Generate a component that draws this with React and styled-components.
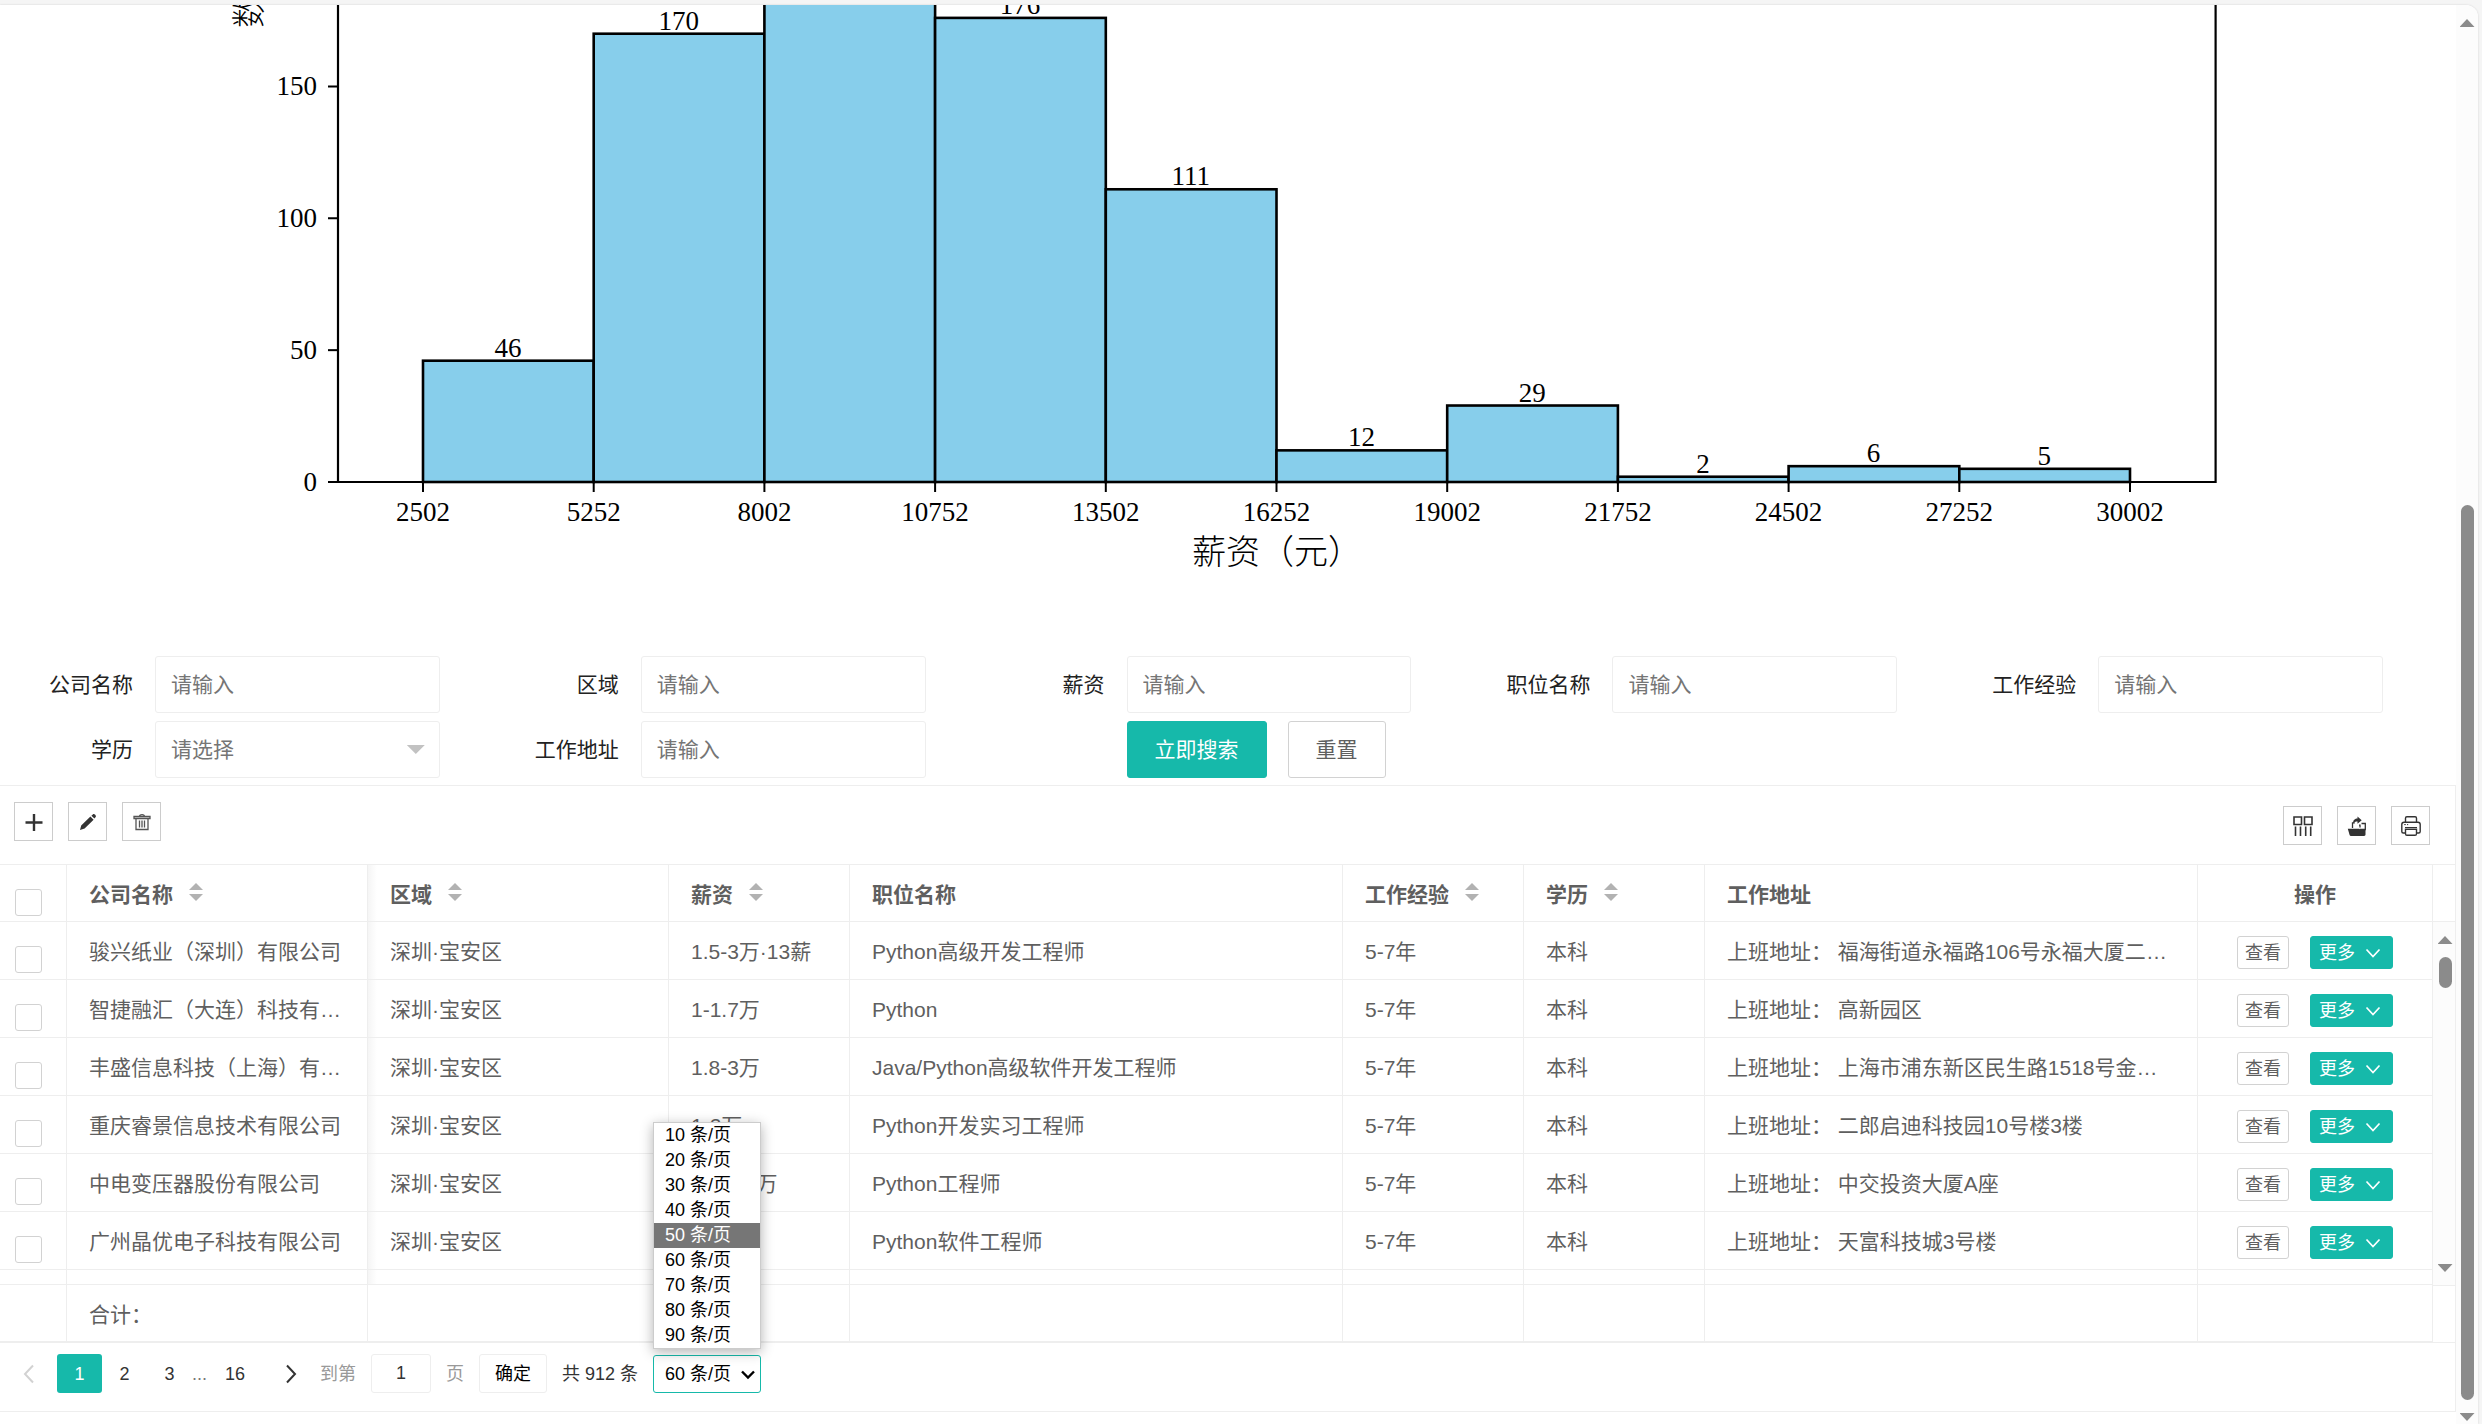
import React from "react";
import styled, { createGlobalStyle, css } from "styled-components";

const TEAL = "#16b9aa";
const LINE = "#eeeeee";
const SANS = '"Liberation Sans", "Noto Sans CJK SC", sans-serif';
const SERIF = '"Liberation Serif", "Noto Sans CJK SC", serif';

const GlobalStyle = createGlobalStyle`
  *, *::before, *::after { box-sizing: border-box; }
  body {
    margin: 0;
    background: #f5f5f5;
    color: #333;
    font: 21px/28px ${SANS};
  }
  button, input, select { font: inherit; margin: 0; }
`;

/* ---------- page frame ---------- */

const Frame = styled.div`
  display: flex;
  min-height: calc(100vh - 5px);
  margin: 5px 4px 0 0;
  overflow: hidden;
  background: #fff;
  border-top-right-radius: 12px;
  box-shadow: 0 0 2px #ccc;
`;

const Content = styled.main`
  flex: 1;
  min-width: 0;
`;

const ScrollTrack = styled.div`
  display: flex;
  flex-direction: column;
  align-items: center;
  width: 22px;
  padding: 14px 0 3px;
  background: #fcfcfc;
`;

const Arrow = styled.span`
  flex: none;
  width: 15px;
  height: 8px;
  background: #8b8b8b;
  clip-path: ${(p) =>
    p.$down ? "polygon(0 0, 100% 0, 50% 100%)" : "polygon(50% 0, 100% 100%, 0 100%)"};
`;

const TrackSpace = styled.span`
  flex: ${(p) => p.$grow};
`;

const Thumb = styled.span`
  flex: ${(p) => p.$grow};
  width: 13px;
  margin-bottom: 13px;
  border-radius: 7px;
  background: #8b8b8b;
`;

/* ---------- chart ---------- */

const ChartSvg = styled.svg`
  display: block;
  width: 100%;
  height: auto;
  font-family: ${SERIF};
  font-size: 27px;
  fill: #000;
`;

const BINS = [46, 170, 262, 176, 111, 12, 29, 2, 6, 5];
const TICKS = [2502, 5252, 8002, 10752, 13502, 16252, 19002, 21752, 24502, 27252, 30002];
const BASE = 482;
const binX = (i) => 423 + i * 170.7;
const valueY = (v) => BASE - v * 2.637;

function Histogram() {
  return (
    <ChartSvg viewBox="0 5 2456 651" role="img" aria-label="薪资（元）">
      {BINS.map((v, i) => (
        <g key={i}>
          <rect
            x={binX(i)}
            y={valueY(v)}
            width={170.7}
            height={BASE - valueY(v)}
            fill="#87ceeb"
            stroke="#000"
            strokeWidth="2.6"
          />
          {v < 200 && (
            <text x={binX(i) + 85} y={valueY(v) - 4} textAnchor="middle">
              {v}
            </text>
          )}
        </g>
      ))}
      <path d="M338 0V482H2215.6V0" fill="none" stroke="#000" strokeWidth="2.2" />
      {TICKS.map((t, i) => (
        <g key={t}>
          <path d={`M${binX(i)} 482V492`} stroke="#000" strokeWidth="2" />
          <text x={binX(i)} y="521" textAnchor="middle">
            {t}
          </text>
        </g>
      ))}
      {[0, 50, 100, 150].map((v) => (
        <g key={v}>
          <path d={`M328 ${valueY(v)}H338`} stroke="#000" strokeWidth="2" />
          <text x="317" y={valueY(v) + 9} textAnchor="end">
            {v}
          </text>
        </g>
      ))}
      <text x="1277" y="564" textAnchor="middle" fontSize="34" fontWeight="300">
        薪资（元）
      </text>
      <text transform="translate(261 28) rotate(-90)" fontSize="34" fontWeight="300">
        数
      </text>
    </ChartSvg>
  );
}

/* ---------- search form ---------- */

const SearchForm = styled.form`
  display: grid;
  grid-template-columns: repeat(5, minmax(0, 1fr));
  row-gap: 8px;
  padding: 0 12px 7px 15px;
`;

const Field = styled.div`
  display: flex;
  align-items: center;
  padding-right: 61px;
`;

const FieldLabel = styled.label`
  flex: none;
  width: 140px;
  padding-right: 22px;
  text-align: right;
  color: #222;
`;

const box = css`
  width: 100%;
  height: 57px;
  padding: 0 15px;
  border: 1px solid ${LINE};
  border-radius: 3px;
  background: #fff;
  outline: 0;
`;

const TextInput = styled.input`
  ${box}
  &::placeholder { color: #757575; opacity: 1; }
`;

const SelectWrap = styled.div`
  position: relative;
  flex: 1;
`;

const FormSelect = styled.select`
  ${box}
  appearance: none;
  color: #757575;
`;

const Caret = styled.span`
  position: absolute;
  right: 15px;
  top: 24px;
  width: 18px;
  height: 9px;
  background: #c2c2c2;
  clip-path: polygon(0 0, 100% 0, 50% 100%);
  pointer-events: none;
`;

const FormActions = styled.div`
  display: flex;
  gap: 21px;
  padding-left: 140px;
`;

const Button = styled.button`
  height: ${(p) => (p.$small ? 33 : 57)}px;
  padding: 0 ${(p) => (p.$small ? 7 : 27)}px;
  border: 1px solid ${(p) => (p.$primary ? TEAL : "#d2d2d2")};
  border-radius: 3px;
  background: ${(p) => (p.$primary ? TEAL : "#fff")};
  color: ${(p) => (p.$primary ? "#fff" : "#5f5f5f")};
  font-size: ${(p) => (p.$small ? 18 : 21)}px;
  line-height: 28px;
  white-space: nowrap;
`;

const MoreButton = styled(Button)`
  display: inline-flex;
  align-items: center;
  gap: 10px;
  padding: 0 11px 0 8px;
`;

/* ---------- table ---------- */

const TableView = styled.section`
  border: solid ${LINE};
  border-width: 1px 1px 1px 0;
`;

const Toolbar = styled.div`
  display: flex;
  justify-content: space-between;
  height: 79px;
  padding: 16px 25px 0 14px;
  border-bottom: 1px solid ${LINE};
`;

const ToolGroup = styled.div`
  display: flex;
  gap: 15px;
  padding-top: ${(p) => (p.$right ? 4 : 0)}px;
`;

const ToolButton = styled.button`
  display: grid;
  place-items: center;
  width: 39px;
  height: 39px;
  padding: 0;
  border: 1px solid #ccc;
  background: #fff;
  color: #333;
`;

const TableArea = styled.div`
  display: grid;
  grid-template-columns: minmax(0, 1fr) 22px;
`;

const Table = styled.table`
  width: 100%;
  table-layout: fixed;
  border-collapse: separate;
  border-spacing: 0;
  color: #5f5f5f;
`;

const cell = css`
  height: ${(p) => p.$h || 58}px;
  padding: 2px 22px 0;
  border: solid ${LINE};
  border-width: 0 1px 1px 0;
  overflow: hidden;
  white-space: nowrap;
  text-overflow: ellipsis;
  text-align: left;
`;

const Th = styled.th`
  ${cell}
  padding-top: 4px;
  ${(p) => p.$center && "text-align: center;"}
`;

const Td = styled.td`
  ${cell}
  ${(p) => p.$shade && "background: linear-gradient(90deg, #f5f5f5, #fff 9px);"}
`;

const ShadeTh = styled(Th)`
  background: linear-gradient(90deg, #f5f5f5, #fff 9px);
`;

const FootTd = styled(Td)`
  padding-top: 4px;
  border-bottom-width: 2px;
`;

const CheckHead = styled.th`
  height: 57px;
  padding: 24px 0 0 15px;
  vertical-align: top;
  border: solid ${LINE};
  border-width: 0 1px 1px 0;
`;

const CheckCell = styled.td`
  padding: 24px 0 0 15px;
  vertical-align: top;
  border: solid ${LINE};
  border-width: 0 1px 1px 0;
`;

const CheckBox = styled.input`
  display: block;
  appearance: none;
  width: 27px;
  height: 27px;
  border: 1px solid #d2d2d2;
  border-radius: 3px;
  background: #fff;
`;

const HeadLine = styled.span`
  display: flex;
  align-items: center;
  gap: 16px;
`;

const Sort = styled.span`
  display: flex;
  flex-direction: column;
  gap: 4px;
  padding-bottom: 6px;
  &::before, &::after {
    content: "";
    width: 14px;
    height: 7px;
    background: #b2b2b2;
    clip-path: polygon(50% 0, 100% 100%, 0 100%);
  }
  &::after { clip-path: polygon(0 0, 100% 0, 50% 100%); }
`;

const RowActions = styled.div`
  display: flex;
  justify-content: center;
  gap: 21px;
  margin: 0 -22px;
  padding-top: 2px;
`;

const SideColumn = styled.div`
  display: flex;
  flex-direction: column;
`;

const SideHead = styled.div`
  height: 57px;
  border-bottom: 1px solid ${LINE};
`;

const SideTrack = styled.div`
  flex: 1;
  display: flex;
  flex-direction: column;
  align-items: center;
  padding: 14px 0 13px 2px;
  background: #fcfcfc;
  border-bottom: 1px solid ${LINE};
`;

const SideThumb = styled.span`
  width: 13px;
  height: 31px;
  margin: 13px 0 auto;
  border-radius: 7px;
  background: #8b8b8b;
`;

/* ---------- pager ---------- */

const Pager = styled.nav`
  display: flex;
  align-items: center;
  height: 68px;
  padding: 0 0 7px 11px;
  font-size: 18px;
`;

const PageButton = styled.button`
  display: flex;
  align-items: center;
  justify-content: ${(p) => (p.$start ? "flex-start" : "center")};
  width: ${(p) => p.$w || 45}px;
  height: 39px;
  padding: 0 ${(p) => (p.$start ? 12 : 0)}px;
  border: 0;
  border-radius: 3px;
  background: ${(p) => (p.$active ? TEAL : "transparent")};
  color: ${(p) => (p.$active ? "#fff" : p.disabled ? "#d2d2d2" : "#333")};
`;

const Dots = styled.span`
  width: 16px;
  color: #777;
`;

const Jump = styled.div`
  display: flex;
  align-items: center;
  gap: 15px;
  color: #999;
`;

const JumpInput = styled.input`
  width: 60px;
  height: 39px;
  padding: 0;
  border: 1px solid ${LINE};
  border-radius: 3px;
  text-align: center;
  color: #333;
`;

const Confirm = styled.button`
  width: 68px;
  height: 39px;
  padding: 0;
  border: 1px solid ${LINE};
  border-radius: 3px;
  background: #fff;
  color: #000;
`;

const Count = styled.span`
  color: #333;
`;

const LimitWrap = styled.div`
  position: relative;
  color: #000;
`;

const LimitSelect = styled.select`
  display: block;
  appearance: none;
  width: 108px;
  height: 38px;
  padding: 0 11px;
  border: 1px solid ${TEAL};
  border-radius: 3px;
  background: #fff;
  color: #000;
  outline: 0;
`;

const LimitChevron = styled.svg`
  position: absolute;
  right: 6px;
  top: 15px;
  pointer-events: none;
`;

const Options = styled.ul`
  position: absolute;
  left: 0;
  right: 0;
  bottom: calc(100% + 6px);
  margin: 0;
  padding: 0;
  list-style: none;
  border: 1px solid #ccc;
  background: #fff;
  box-shadow: 0 3px 12px rgba(0, 0, 0, 0.3);
`;

const Option = styled.li`
  height: 25px;
  padding-left: 11px;
  line-height: 25px;
  background: ${(p) => (p.$active ? "#767676" : "#fff")};
  color: ${(p) => (p.$active ? "#fff" : "#000")};
`;

/* ---------- icons ---------- */

const Svg = ({ size = 20, children }) => (
  <svg width={size} height={size} viewBox="0 0 20 20" fill="none" stroke="currentColor" aria-hidden="true">
    {children}
  </svg>
);

const PlusIcon = () => (
  <Svg>
    <path d="M1.5 10.5h17M10 2v17" strokeWidth="2.4" />
  </Svg>
);

const PencilIcon = () => (
  <Svg>
    <path
      d="M2 18l1.2-4.6L12.400 4.600l3.200 3.200L6.600 16.600zM13.400 3.700l1.400-1.300c.6-.5 1.500-.5 2.200.2l.5.6c.6.6.6 1.400 0 2l-1.100 1.300z"
      fill="currentColor"
      stroke="none"
    />
  </Svg>
);

const TrashIcon = () => (
  <Svg>
    <path d="M2 4.500h16v2H2zM7.500 4.500c0-2.600 5-2.600 5 0M4 6.500V17.500h12V6.500" stroke="#555" strokeWidth="1.300" />
    <path d="M7.500 8.500v7M10 8.500v7M12.500 8.500v7" stroke="#555" strokeWidth="1.300" />
  </Svg>
);

const ColumnsIcon = () => (
  <Svg>
    <path d="M1 1h7.500v7.500H1zM11.500 1H19v7.500h-7.500z" strokeWidth="1.600" />
    <path d="M2.500 10.500v9.500M7.500 10.500v9.500M12.700 10.500v9.500M17.700 10.500v9.500" strokeWidth="1.600" />
  </Svg>
);

const ExportIcon = () => (
  <Svg>
    <path
      d="M.8 12.800h11.600l1.200 1.200H18.500V18.500c0 .9-.5 1.400-1.400 1.400H4c-.7 0-1.200-.4-1.400-1z"
      fill="currentColor"
      stroke="none"
    />
    <path d="M5.500 12V6.800h2.300M13 11.500V9.200h-1M14.500 7.500h3.800v6H13" strokeWidth="1.300" />
    <path d="M6 7.500C6 4 8 2.600 10.500 2.600V.5l4.200 3.700-4.200 3.500V5.400C8.600 5.400 7 5.900 6 7.500z" fill="currentColor" stroke="none" />
  </Svg>
);

const PrintIcon = () => (
  <Svg>
    <path
      d="M4.500 6V2.200c0-.9.500-1.400 1.400-1.400h8.200c.9 0 1.400.5 1.400 1.400V6M4.500 17H2.300C1.300 17 .8 16.400.8 15.500v-7C.8 7 1.700 6.200 3 6.200h14c1.300 0 2.200.8 2.200 2.300v7c0 .9-.5 1.500-1.500 1.500h-2.200M4.500 13.200h11v4.500c0 1-.5 1.600-1.500 1.600H6c-1 0-1.500-.6-1.500-1.600z"
      strokeWidth="1.400"
    />
    <path d="M3.200 8.600h1.600M6 8.600h1.200M4 11.500h12" strokeWidth="1" />
  </Svg>
);

const SmallDown = () => (
  <svg width="16" height="10" viewBox="0 0 16 10" fill="none" stroke="currentColor" strokeWidth="1.700" aria-hidden="true">
    <path d="M1.500 1.500L8 8.500l6.500-7" />
  </svg>
);

const SideChevron = ({ right }) => (
  <svg width="12" height="20" viewBox="0 0 12 20" fill="none" stroke="currentColor" strokeWidth="2" aria-hidden="true">
    <path d={right ? "M2 1.500L10 10 2 18.500" : "M10 1.500L2 10l8 8.500"} />
  </svg>
);

/* ---------- data ---------- */

const COLUMNS = [
  { title: "公司名称", width: 301, sort: true },
  { title: "区域", width: 301, sort: true, shade: true },
  { title: "薪资", width: 181, sort: true },
  { title: "职位名称" },
  { title: "工作经验", width: 181, sort: true },
  { title: "学历", width: 181, sort: true },
  { title: "工作地址" },
];

const ROWS = [
  ["骏兴纸业（深圳）有限公司", "1.5-3万·13薪", "Python高级开发工程师", "福海街道永福路106号永福大厦二楼201"],
  ["智捷融汇（大连）科技有限公司", "1-1.7万", "Python", "高新园区"],
  ["丰盛信息科技（上海）有限公司", "1.8-3万", "Java/Python高级软件开发工程师", "上海市浦东新区民生路1518号金鹰大厦"],
  ["重庆睿景信息技术有限公司", "1-2万", "Python开发实习工程师", "二郎启迪科技园10号楼3楼"],
  ["中电变压器股份有限公司", "1.2-1.8万", "Python工程师", "中交投资大厦A座"],
  ["广州晶优电子科技有限公司", "1-2万", "Python软件工程师", "天富科技城3号楼"],
].map(([company, salary, job, address]) => [
  company,
  "深圳·宝安区",
  salary,
  job,
  "5-7年",
  "本科",
  `上班地址： ${address}`,
]);

const LIMITS = [10, 20, 30, 40, 50, 60, 70, 80, 90];

const TextField = ({ id, label }) => (
  <Field>
    <FieldLabel htmlFor={id}>{label}</FieldLabel>
    <TextInput id={id} placeholder="请输入" />
  </Field>
);

function Search() {
  return (
    <SearchForm onSubmit={(e) => e.preventDefault()}>
      <TextField id="company" label="公司名称" />
      <TextField id="area" label="区域" />
      <TextField id="salary" label="薪资" />
      <TextField id="job" label="职位名称" />
      <TextField id="experience" label="工作经验" />
      <Field>
        <FieldLabel htmlFor="degree">学历</FieldLabel>
        <SelectWrap>
          <FormSelect id="degree">
            <option>请选择</option>
          </FormSelect>
          <Caret />
        </SelectWrap>
      </Field>
      <TextField id="address" label="工作地址" />
      <FormActions>
        <Button $primary>立即搜索</Button>
        <Button type="reset">重置</Button>
      </FormActions>
    </SearchForm>
  );
}

function DataTable() {
  return (
    <TableArea>
      <Table>
        <colgroup>
          <col style={{ width: 67 }} />
          {COLUMNS.map((c) => (
            <col key={c.title} style={{ width: c.width }} />
          ))}
          <col style={{ width: 235 }} />
        </colgroup>
        <thead>
          <tr>
            <CheckHead>
              <CheckBox type="checkbox" aria-label="全选" />
            </CheckHead>
            {COLUMNS.map((c) => {
              const Head = c.shade ? ShadeTh : Th;
              return (
                <Head key={c.title} $h={57}>
                  <HeadLine>
                    {c.title}
                    {c.sort && <Sort />}
                  </HeadLine>
                </Head>
              );
            })}
            <Th $h={57} $center>
              操作
            </Th>
          </tr>
        </thead>
        <tbody>
          {ROWS.map((row) => (
            <tr key={row[0]}>
              <CheckCell>
                <CheckBox type="checkbox" aria-label={row[0]} />
              </CheckCell>
              {row.map((text, i) => (
                <Td key={i} $shade={COLUMNS[i].shade}>
                  {text}
                </Td>
              ))}
              <Td>
                <RowActions>
                  <Button $small>查看</Button>
                  <MoreButton $small $primary>
                    更多
                    <SmallDown />
                  </MoreButton>
                </RowActions>
              </Td>
            </tr>
          ))}
          <tr>
            {Array.from({ length: 9 }, (_, i) => (
              <Td key={i} $h={15} $shade={i === 2} />
            ))}
          </tr>
        </tbody>
        <tfoot>
          <tr>
            {Array.from({ length: 9 }, (_, i) => (
              <FootTd key={i}>{i === 1 ? "合计：" : ""}</FootTd>
            ))}
          </tr>
        </tfoot>
      </Table>
      <SideColumn>
        <SideHead />
        <SideTrack>
          <Arrow />
          <SideThumb />
          <Arrow $down />
        </SideTrack>
        <SideHead />
      </SideColumn>
    </TableArea>
  );
}

function Pagination() {
  return (
    <Pager aria-label="分页">
      <PageButton $w={46} $start disabled aria-label="上一页">
        <SideChevron />
      </PageButton>
      <PageButton $active>1</PageButton>
      <PageButton>2</PageButton>
      <PageButton>3</PageButton>
      <Dots>...</Dots>
      <PageButton $w={54}>16</PageButton>
      <PageButton $w={58} aria-label="下一页">
        <SideChevron right />
      </PageButton>
      <Jump>
        <label htmlFor="page">到第</label>
        <JumpInput id="page" defaultValue="1" />
        <span>页</span>
        <Confirm>确定</Confirm>
        <Count>共 912 条</Count>
        <LimitWrap>
          <LimitSelect aria-label="每页条数" defaultValue="60">
            {LIMITS.map((n) => (
              <option key={n} value={n}>{`${n} 条/页`}</option>
            ))}
          </LimitSelect>
          <LimitChevron width="14" height="10" viewBox="0 0 14 10" fill="none" stroke="#000" strokeWidth="2.400">
            <path d="M1 1.500l6 6 6-6" />
          </LimitChevron>
          <Options role="listbox">
            {LIMITS.map((n) => (
              <Option key={n} role="option" aria-selected={n === 50} $active={n === 50}>
                {`${n} 条/页`}
              </Option>
            ))}
          </Options>
        </LimitWrap>
      </Jump>
    </Pager>
  );
}

export default function App() {
  return (
    <>
      <GlobalStyle />
      <Frame>
        <Content>
          <Histogram />
          <Search />
          <TableView>
            <Toolbar>
              <ToolGroup>
                <ToolButton aria-label="新增"><PlusIcon /></ToolButton>
                <ToolButton aria-label="编辑"><PencilIcon /></ToolButton>
                <ToolButton aria-label="删除"><TrashIcon /></ToolButton>
              </ToolGroup>
              <ToolGroup $right>
                <ToolButton aria-label="筛选列"><ColumnsIcon /></ToolButton>
                <ToolButton aria-label="导出"><ExportIcon /></ToolButton>
                <ToolButton aria-label="打印"><PrintIcon /></ToolButton>
              </ToolGroup>
            </Toolbar>
            <DataTable />
            <Pagination />
          </TableView>
        </Content>
        <ScrollTrack>
          <Arrow />
          <TrackSpace $grow={478} />
          <Thumb $grow={895} />
          <Arrow $down />
        </ScrollTrack>
      </Frame>
    </>
  );
}
